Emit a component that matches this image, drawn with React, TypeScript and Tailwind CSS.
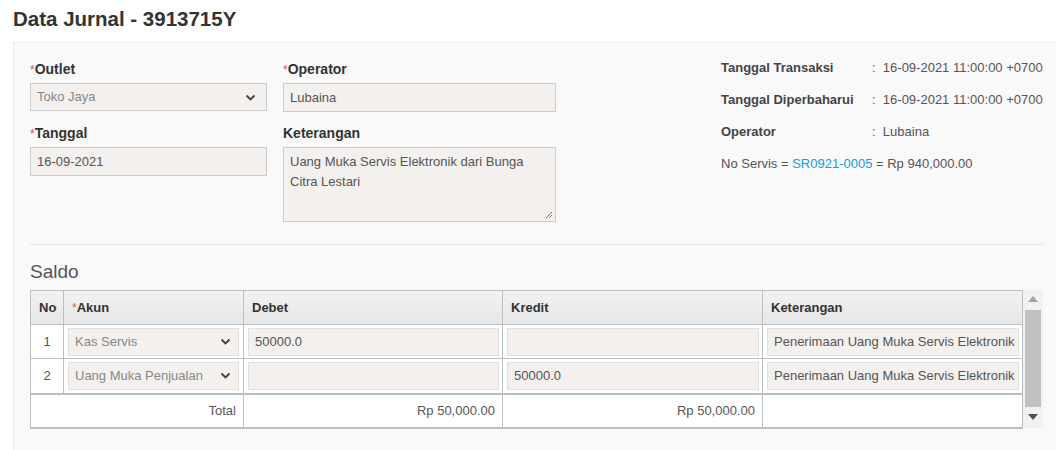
import React from 'react';

const font = { fontFamily: '"Liberation Sans", Arial, sans-serif' };

const Chevron = () => (
  <svg width="11" height="7" viewBox="0 0 11 7" className="shrink-0">
    <path d="M1.5 1.5 L5.5 5.5 L9.5 1.5" fill="none" stroke="#444" strokeWidth="1.9" />
  </svg>
);

const Req = () => <span className="text-[#d9534f] text-[12px] align-top relative top-[1px] font-normal">*</span>;

const rows = [
  { no: 1, akun: 'Kas Servis', debet: '50000.0', kredit: '', ket: 'Penerimaan Uang Muka Servis Elektronik' },
  { no: 2, akun: 'Uang Muka Penjualan', debet: '', kredit: '50000.0', ket: 'Penerimaan Uang Muka Servis Elektronik' },
];

const CellInput = ({ value }: { value: string }) => (
  <div className="h-[28px] bg-[#f3f0ed] border border-[#e3dfdb] px-[6px] flex items-center text-[13px] text-[#555] whitespace-nowrap overflow-hidden">
    {value}
  </div>
);

export default function App() {
  return (
    <div className="bg-white w-[1056px] h-[450px] overflow-hidden text-[#333]" style={font}>
      <div className="h-[42px] pl-[13px] pt-[6px]">
        <h1 className="text-[20.5px] font-bold leading-[26px] text-[#333]">Data Jurnal - 3913715Y</h1>
      </div>

      <div className="ml-[13px] bg-[#f9f9f9] border-l border-t border-[#ececec] pl-[16px] pr-[13px] pt-[16px] h-[420px]">
        <div className="flex">
          <div className="grid grid-cols-[237px_273px] gap-x-[16px] shrink-0">
            <div>
              <div className="text-[14px] font-bold leading-[20px] mb-[4px]"><Req />Outlet</div>
              <div className="h-[28px] bg-[#f3f0ed] border border-[#ccc] px-[6px] pr-[10px] flex items-center justify-between text-[13px] text-[#888]">
                Toko Jaya
                <Chevron />
              </div>
            </div>
            <div>
              <div className="text-[14px] font-bold leading-[20px] mb-[4px]"><Req />Operator</div>
              <div className="h-[29px] bg-[#f3f0ed] border border-[#ccc] px-[6px] flex items-center text-[13px] text-[#555]">
                Lubaina
              </div>
            </div>
            <div className="mt-[11px]">
              <div className="text-[14px] font-bold leading-[20px] mb-[4px]"><Req />Tanggal</div>
              <div className="h-[29px] bg-[#f3f0ed] border border-[#ccc] px-[6px] flex items-center text-[13px] text-[#555]">
                16-09-2021
              </div>
            </div>
            <div className="mt-[11px]">
              <div className="text-[14px] font-bold leading-[20px] mb-[4px]">Keterangan</div>
              <div className="relative h-[75px] bg-[#f3f0ed] border border-[#ccc] px-[6px] pt-[4px] text-[13px] leading-[20px] text-[#555]">
                Uang Muka Servis Elektronik dari Bunga Citra Lestari
                <svg width="8" height="8" viewBox="0 0 8 8" className="absolute right-[2px] bottom-[2px]">
                  <path d="M7 1 L1 7 M7 4 L4 7" stroke="#777" strokeWidth="1" />
                </svg>
              </div>
            </div>
          </div>

          <div className="ml-[165px] -mt-[1px] text-[13px] leading-[20px] whitespace-nowrap shrink-0">
            {[
              ['Tanggal Transaksi', '16-09-2021 11:00:00 +0700'],
              ['Tanggal Diperbaharui', '16-09-2021 11:00:00 +0700'],
              ['Operator', 'Lubaina'],
            ].map(([k, v]) => (
              <div key={k} className="flex h-[32px] items-start">
                <span className="w-[151px] font-bold text-[#444]">{k}</span>
                <span className="text-[#555]">:&nbsp; {v}</span>
              </div>
            ))}
            <div className="text-[#555]">
              No Servis = <span className="text-[#1a9bdb]">SR0921-0005</span> = Rp 940,000.00
            </div>
          </div>
        </div>

        <div className="mt-[22px] border-t border-[#e3e3e3]" />

        <div className="mt-[15px] text-[19px] leading-[24px] text-[#555]">Saldo</div>

        <div className="mt-[6px] flex">
          <table className="w-[992px] table-fixed border-collapse bg-white text-[13px]">
            <colgroup>
              <col className="w-[33px]" />
              <col className="w-[180px]" />
              <col className="w-[259px]" />
              <col className="w-[260px]" />
              <col className="w-[260px]" />
            </colgroup>
            <thead>
              <tr className="h-[34px] bg-gradient-to-b from-[#f2f2f2] to-[#e6e6e6]">
                <th className="border border-[#b7c0c5] text-left px-[8px] font-bold">No</th>
                <th className="border border-[#b7c0c5] text-left px-[8px] font-bold"><Req />Akun</th>
                <th className="border border-[#b7c0c5] text-left px-[8px] font-bold">Debet</th>
                <th className="border border-[#b7c0c5] text-left px-[8px] font-bold">Kredit</th>
                <th className="border border-[#b7c0c5] text-left px-[8px] font-bold">Keterangan</th>
              </tr>
            </thead>
            <tbody>
              {rows.map((r, i) => (
                <tr key={r.no} className={i === rows.length - 1 ? 'h-[35px] border-b-2 border-[#b7c0c5]' : 'h-[34px]'}>
                  <td className="border border-[#b7c0c5] text-center text-[#555]">{r.no}</td>
                  <td className="border border-[#b7c0c5] px-[4px]">
                    <div className="h-[28px] bg-[#f3f0ed] border border-[#e3dfdb] pl-[6px] pr-[7px] flex items-center justify-between text-[13px] text-[#888] whitespace-nowrap">
                      {r.akun}
                      <Chevron />
                    </div>
                  </td>
                  <td className="border border-[#b7c0c5] pl-[4px] pr-[3px]"><CellInput value={r.debet} /></td>
                  <td className="border border-[#b7c0c5] pl-[4px] pr-[3px]"><CellInput value={r.kredit} /></td>
                  <td className="border border-[#b7c0c5] pl-[4px] pr-[3px]"><CellInput value={r.ket} /></td>
                </tr>
              ))}
              <tr className="h-[34px] border-b-2 border-[#b7c0c5]">
                <td colSpan={2} className="border border-[#b7c0c5] border-b-2 text-right px-[7px] text-[#555]">Total</td>
                <td className="border border-[#b7c0c5] border-b-2 text-right px-[7px] text-[#555]">Rp 50,000.00</td>
                <td className="border border-[#b7c0c5] border-b-2 text-right px-[7px] text-[#555]">Rp 50,000.00</td>
                <td className="border border-[#b7c0c5] border-b-2" />
              </tr>
            </tbody>
          </table>
          <div className="w-[21px] h-[138px] bg-[#f1f1f1] flex flex-col items-center">
            <svg width="10" height="6" viewBox="0 0 10 6" className="mt-[6px]">
              <path d="M0 6 L5 0 L10 6 Z" fill="#a3a3a3" />
            </svg>
            <div className="w-[16px] h-[97px] bg-[#c1c1c1] mt-[8px]" />
            <svg width="10" height="6" viewBox="0 0 10 6" className="mt-[7px]">
              <path d="M0 0 L10 0 L5 6 Z" fill="#505050" />
            </svg>
          </div>
        </div>
      </div>
    </div>
  );
}
